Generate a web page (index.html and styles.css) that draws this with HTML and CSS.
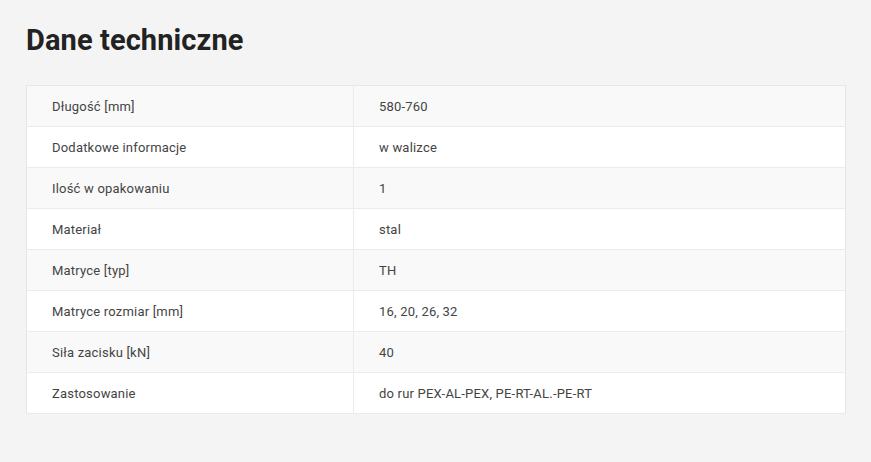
FILE: index.html
```html
<!DOCTYPE html>
<html lang="pl">
<head>
<meta charset="utf-8">
<link rel="stylesheet" href="styles.css">
</head>
<body>
<section class="specs">
  <h2 class="specs-title">Dane techniczne</h2>
  <table class="specs-table">
    <tbody>
      <tr><td class="label">Długość [mm]</td><td class="value">580-760</td></tr>
      <tr><td class="label">Dodatkowe informacje</td><td class="value">w walizce</td></tr>
      <tr><td class="label">Ilość w opakowaniu</td><td class="value">1</td></tr>
      <tr><td class="label">Materiał</td><td class="value">stal</td></tr>
      <tr><td class="label">Matryce [typ]</td><td class="value">TH</td></tr>
      <tr><td class="label">Matryce rozmiar [mm]</td><td class="value">16, 20, 26, 32</td></tr>
      <tr><td class="label">Siła zacisku [kN]</td><td class="value">40</td></tr>
      <tr><td class="label">Zastosowanie</td><td class="value">do rur PEX-AL-PEX, PE-RT-AL.-PE-RT</td></tr>
    </tbody>
  </table>
</section>
</body>
</html>
```

FILE: styles.css
```css
html, body {
  margin: 0;
  padding: 0;
  background: #f4f4f4;
}
body {
  font-family: Roboto, "Liberation Sans", sans-serif;
  color: #444;
}
.specs {
  padding: 22px 25px 0 26px;
}
.specs-title {
  margin: 0 0 27px 0;
  font-size: 29px;
  font-weight: 700;
  line-height: 36px;
  color: #222;
  letter-spacing: 0.1px;
}
.specs-table {
  width: 820px;
  border-collapse: collapse;
  background: #fff;
  border: 1px solid #e6e6e6;
}
.specs-table tr {
  height: 41px;
  border-bottom: 1px solid #ebebeb;
}
.specs-table tr:nth-child(odd) {
  background: #f9f9f9;
}
.specs-table td {
  padding: 0 0 0 25px;
  font-size: 13px;
  letter-spacing: 0.2px;
  vertical-align: middle;
}
.specs-table .label {
  width: 301px;
  border-right: 1px solid #ebebeb;
}
```
